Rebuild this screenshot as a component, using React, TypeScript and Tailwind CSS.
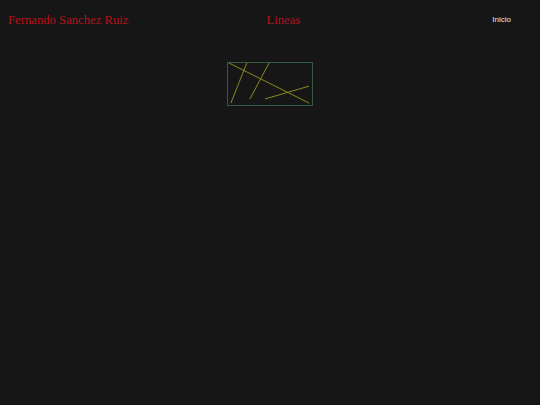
export default function App() {
  return (
    <div className="min-h-[405px] w-full bg-[#161616]">
      <header className="flex items-start pt-[12px] pl-2">
        <h1 className="font-['Liberation_Serif',serif] text-[12.7px] leading-[16px] text-[#b5121c]">
          Fernando Sanchez Ruiz
        </h1>
        <h2 className="ml-[138px] font-['Liberation_Serif',serif] text-[12.7px] leading-[16px] text-[#b5121c]">
          Lineas
        </h2>
        <nav className="ml-auto mr-[29px] mt-[2px]">
          <a className="block font-['Liberation_Sans',sans-serif] text-[8px] leading-[12px] text-[#e8e8e8]">
            Inicio
          </a>
        </nav>
      </header>
      <div className="mt-[34px] flex justify-center">
        <svg
          width="86"
          height="44"
          viewBox="0 0 86 44"
          className="ml-[-1px] border border-[#2f5a48]"
        >
          <g stroke="#8f8f1e" strokeWidth="1" fill="none">
            <line x1="0" y1="0" x2="84" y2="42" />
            <line x1="18.7" y1="0" x2="2" y2="42" />
            <line x1="42" y1="0" x2="22" y2="37.7" />
            <line x1="83.7" y1="24.3" x2="37.7" y2="37.7" />
          </g>
        </svg>
      </div>
    </div>
  );
}
